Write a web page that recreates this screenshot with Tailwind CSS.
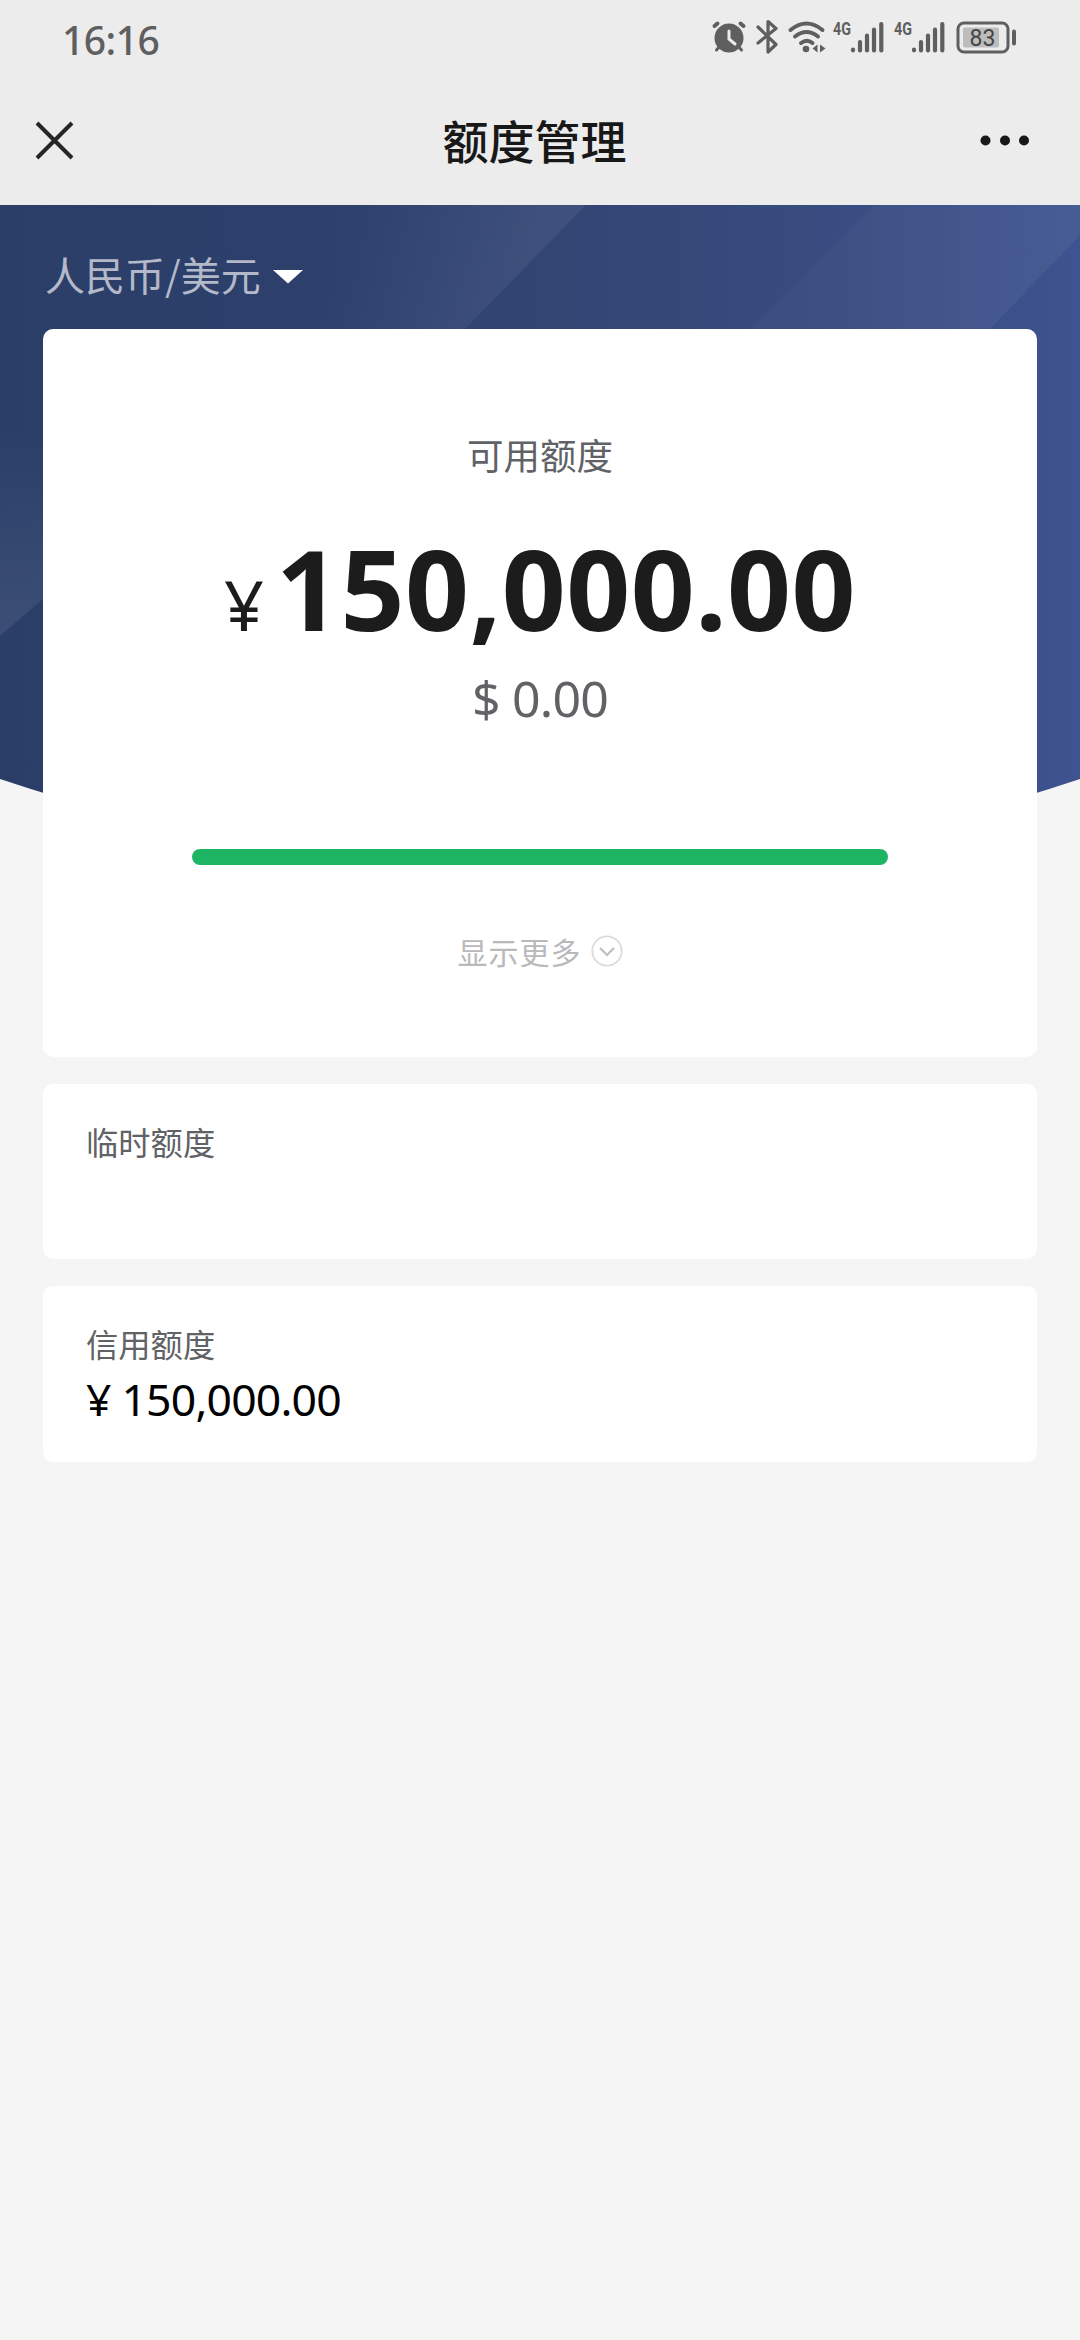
<!DOCTYPE html>
<html lang="zh-CN">
<head>
<meta charset="utf-8">
<title>额度管理</title>
<script src="https://cdn.jsdelivr.net/npm/@tailwindcss/browser@4"></script>
</head>
<body class="relative w-[1080px] h-[2340px] overflow-hidden bg-[#f5f5f5] font-['Noto_Sans_CJK_SC',sans-serif]">
  <div class="h-[205px] bg-[#ececec]">
    <!-- status bar -->
    <div class="flex h-[76px] items-center justify-between pr-10 pl-[62px]">
      <span class="font-['Noto_Sans'] pt-[3px] text-[39px] leading-[73px] font-medium tracking-[-0.5px] text-[#5f5f5f]">16:16</span>
      <svg class="shrink-0" width="350" height="76" viewBox="690 0 350 76" fill="none" stroke="#5f5f5f" stroke-linecap="round" stroke-linejoin="round">
        <g stroke-width="4"><circle cx="729" cy="38" r="14.5" fill="#5f5f5f" stroke="none"/><path d="M714.500 26l3-2.500M743.500 26l-3-2.500"/><path d="M720 46l-3.500 4M738 46l3.500 4" stroke-width="3"/><path d="M729 31v8l6 5" stroke="#ececec" stroke-width="3"/></g>
        <path stroke-width="3.200" d="M758 27l18 17.500-8 7.500V21.500l8 7L758 43"/>
        <path stroke-width="4" d="M790.500 30q16-13 32 0M795 36.500q11.500-9 23 0M801 43q6-4.500 11.500 0"/>
        <circle cx="806" cy="49" r="3.300" fill="#5f5f5f" stroke="none"/>
        <path fill="#5f5f5f" stroke="none" d="M817.500 44.500v8l-5-4zM820 44.500v8l5.500-4z"/>
        <g stroke-width="4.200"><path d="M853 49.500v.8M860 42v8.500M867 35.500v15M874 29.500v21M881.300 24v26.500"/><path d="M914 49.500v.8M921 42v8.500M928 35.500v15M935 29.500v21M942.300 24v26.500"/></g>
        <g fill="#5f5f5f" stroke="none" font-family="Roboto, sans-serif" font-weight="700" font-size="18"><text x="833" y="35" textLength="18" lengthAdjust="spacingAndGlyphs">4G</text><text x="894" y="35" textLength="18" lengthAdjust="spacingAndGlyphs">4G</text></g>
        <rect x="958" y="23" width="50" height="29" rx="6" stroke-width="3"/>
        <rect x="963" y="27.500" width="36" height="20" rx="2" fill="#bdbdbd" stroke="none"/>
        <path stroke-width="4" d="M1014 31.500v12"/>
        <text x="969.500" y="46" fill="#444" stroke="none" font-family="Roboto, sans-serif" font-weight="400" font-size="23">83</text>
      </svg>
    </div>
    <!-- title bar -->
    <div class="flex h-[129px] items-start justify-between pr-[46px] pl-[35px]">
      <svg class="mt-[45px] w-[182px]" height="40" viewBox="0 0 182 40"><path d="M2 2L37 37M37 2L2 37" stroke="#262626" stroke-width="4"/></svg>
      <h1 class="mt-[28px] text-[46px] leading-[70px] font-medium text-[#181818]">额度管理</h1>
      <svg class="mt-[44px] w-[182px]" height="40" viewBox="0 0 182 40" fill="#181818"><circle cx="133.500" cy="20.500" r="5"/><circle cx="153" cy="20.500" r="5"/><circle cx="172" cy="20.500" r="5"/></svg>
    </div>
  </div>

  <!-- decorative backdrop behind the cards -->
  <svg class="absolute left-0 top-[205px]" width="1080" height="650" viewBox="0 205 1080 650">
    <defs>
      <linearGradient id="base" x1="0" y1="0" x2="1" y2="0"><stop offset="0" stop-color="#2a3e68"/><stop offset=".25" stop-color="#2c406b"/><stop offset=".6" stop-color="#344776"/><stop offset="1" stop-color="#3e538f"/></linearGradient>
      <linearGradient id="s1" gradientUnits="userSpaceOnUse" x1="360" y1="205" x2="526" y2="265"><stop offset="0" stop-color="#fff" stop-opacity="0"/><stop offset="1" stop-color="#fff" stop-opacity=".06"/></linearGradient>
      <linearGradient id="s2" gradientUnits="userSpaceOnUse" x1="810" y1="250" x2="1060" y2="250"><stop offset="0" stop-color="#fff" stop-opacity=".02"/><stop offset="1" stop-color="#fff" stop-opacity=".05"/></linearGradient>
      <linearGradient id="s3" gradientUnits="userSpaceOnUse" x1="0" y1="430" x2="0" y2="620"><stop offset="0" stop-color="#fff" stop-opacity="0"/><stop offset="1" stop-color="#fff" stop-opacity=".08"/></linearGradient>
    </defs>
    <path d="M0 205H1080V779Q540 960 0 779z" fill="url(#base)"/>
    <path d="M300 205H586L465 329H200z" fill="url(#s1)"/>
    <path d="M874 205H1080V235L990 329H750z" fill="url(#s2)"/>
    <path d="M0 380H43V599L0 636z" fill="url(#s3)"/>
  </svg>

  <main class="relative px-[43px]">
    <div class="flex h-[124px] items-start pt-[39px] pl-0.5">
      <span class="text-[40px] leading-[60px] text-[#b3b9c8]">人民币/美元</span>
      <svg class="mt-6 ml-[11px]" width="32" height="16" viewBox="0 0 32 16"><path d="M1 2H31L16 15.500z" fill="#fff"/></svg>
    </div>

    <section class="flex h-[728px] flex-col items-center rounded-[10px] bg-white">
      <p class="mt-[99px] text-[36.500px] leading-[54px] text-[#606266]">可用额度</p>
      <p class="mt-[51px] flex h-[110px] items-baseline font-['Noto_Sans'] text-[#1c1c1c]"><span class="text-[70px] leading-[110px]">¥</span><span class="ml-[12px] text-[112px] leading-[110px] font-bold tracking-[0.4px]">150,000.00</span></p>
      <p class="mt-[20px] font-['Noto_Sans'] text-[50px] leading-[70px] tracking-[-0.8px] text-[#606266]">$ 0.00</p>
      <div class="mt-[116px] h-4 w-[696px] rounded-full bg-[#1db464]"></div>
      <div class="mt-[63px] flex items-center gap-[8px] pl-[1px] text-[30px] leading-[46px] tracking-[1px] text-[#b8b9bb]">显示更多
        <svg width="34" height="34" viewBox="0 0 34 34" fill="none"><circle cx="17" cy="17" r="14.700" stroke="#dcdcdc" stroke-width="1.800"/><path d="M10 14l7 7 7-7" stroke="#bfbfbf" stroke-width="2.200"/></svg>
      </div>
    </section>

    <section class="mt-[27px] h-[175px] rounded-[10px] bg-white px-[43px] pt-[33px]">
      <p class="text-[32.300px] leading-[48px] text-[#606266]">临时额度</p>
    </section>

    <section class="mt-[27px] h-[176px] rounded-[10px] bg-white px-[43px] pt-[33px]">
      <p class="text-[32.300px] leading-[48px] text-[#606266]">信用额度</p>
      <p class="font-['Noto_Sans'] text-[44.500px] leading-[64px] tracking-[-0.8px] text-black">¥ 150,000.00</p>
    </section>
  </main>
</body>
</html>
